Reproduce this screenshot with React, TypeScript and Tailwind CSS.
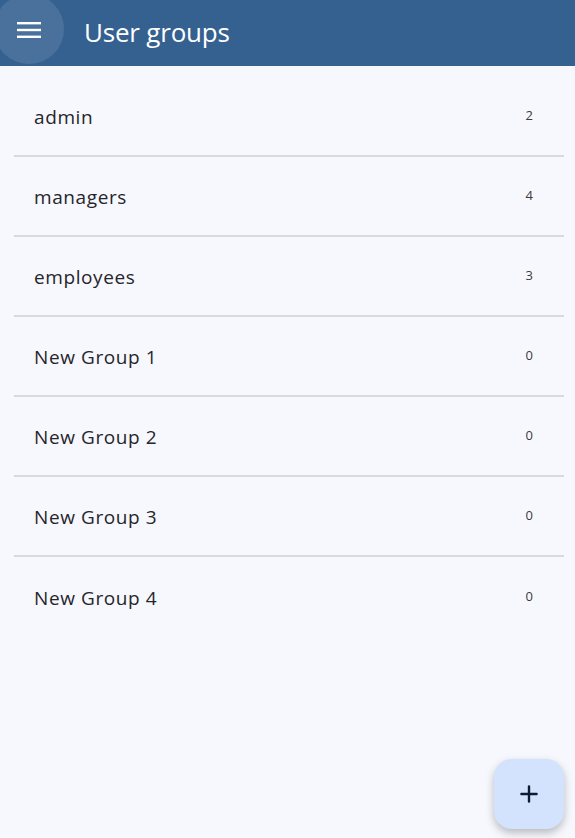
import { Plus } from "lucide-react";

const groups = [
  { name: "admin", count: 2 },
  { name: "managers", count: 4 },
  { name: "employees", count: 3 },
  { name: "New Group 1", count: 0 },
  { name: "New Group 2", count: 0 },
  { name: "New Group 3", count: 0 },
  { name: "New Group 4", count: 0 },
];

export default function App() {
  return (
    <div
      className="relative w-[575px] h-[838px] overflow-hidden bg-[#f7f8fd] text-[#1d1b20]"
      style={{ fontFamily: '"Open Sans", "Noto Sans", sans-serif' }}
    >
      {/* top app bar */}
      <header className="relative h-[66px] bg-[#356191] flex items-center overflow-hidden">
        <div className="absolute left-[-6px] top-[-6px] w-[70px] h-[70px] rounded-full bg-white/10" />
        <button className="relative w-[58px] h-[58px] flex items-center justify-center text-white mt-[-6px]">
          <svg width="24" height="16" viewBox="0 0 24 16" fill="currentColor">
            <rect x="0" y="0" width="24" height="2.4" />
            <rect x="0" y="6.8" width="24" height="2.4" />
            <rect x="0" y="13.6" width="24" height="2.4" />
          </svg>
        </button>
        <h1 className="ml-[26px] text-[26px] text-white tracking-[-0.2px] mt-[-2px]">User groups</h1>
      </header>

      <ul className="pl-[14px] pr-[11px] pt-[11px]">
        {groups.map((g, i) => (
          <li
            key={g.name}
            className={
              "h-[80px] flex items-center justify-between pl-[20px] pr-[31px] " +
              (i < groups.length - 1 ? "border-b-2 border-[#d7d9de]" : "")
            }
          >
            <span className="text-[19px] tracking-[0.6px] mt-[2px] text-[#26252b]">{g.name}</span>
            <span className="text-[13px] text-[#3a3a3f]">{g.count}</span>
          </li>
        ))}
      </ul>

      {/* floating add button */}
      <button className="absolute left-[494px] top-[759px] w-[70px] h-[70px] rounded-[18px] bg-[#d3e3fd] shadow-[0_4px_8px_rgba(0,0,0,0.25)] flex items-center justify-center text-[#0b1d33]">
        <Plus size={26} strokeWidth={2.2} />
      </button>
    </div>
  );
}
